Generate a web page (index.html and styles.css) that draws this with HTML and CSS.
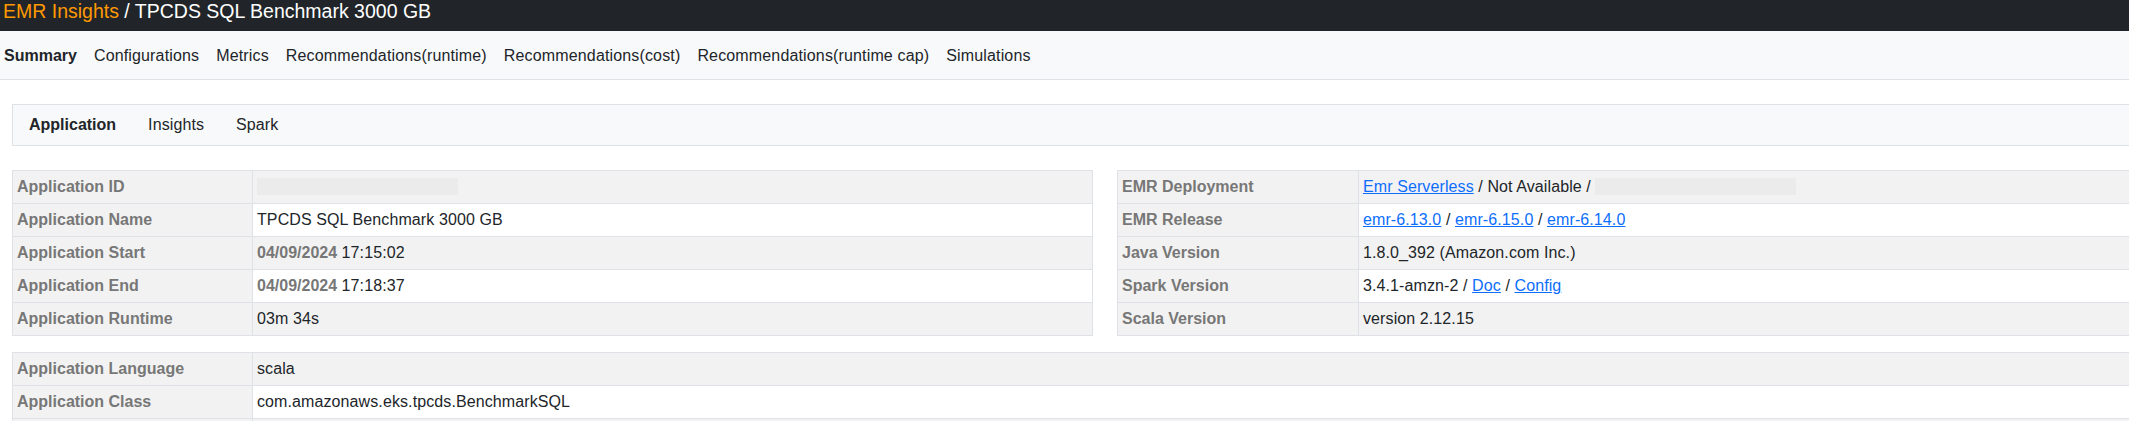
FILE: index.html
```html
<!DOCTYPE html>
<html lang="en">
<head>
<meta charset="utf-8">
<title>EMR Insights</title>
<link rel="stylesheet" href="styles.css">
</head>
<body>
<header class="topbar">
  <span class="brand">EMR Insights</span> / TPCDS SQL Benchmark 3000 GB
</header>
<nav class="mainnav">
  <a class="navlink active">Summary</a>
  <a class="navlink">Configurations</a>
  <a class="navlink">Metrics</a>
  <a class="navlink">Recommendations(runtime)</a>
  <a class="navlink">Recommendations(cost)</a>
  <a class="navlink">Recommendations(runtime cap)</a>
  <a class="navlink">Simulations</a>
</nav>
<main class="page">
  <div class="content">
    <div class="tabs">
      <a class="tab active">Application</a>
      <a class="tab">Insights</a>
      <a class="tab">Spark</a>
    </div>

    <div class="grid2">
      <table class="kv">
        <colgroup><col class="c-label-l"><col></colgroup>
        <tbody>
          <tr><th>Application ID</th><td><span class="redact"></span></td></tr>
          <tr><th>Application Name</th><td>TPCDS SQL Benchmark 3000 GB</td></tr>
          <tr><th>Application Start</th><td><b class="date">04/09/2024</b> 17:15:02</td></tr>
          <tr><th>Application End</th><td><b class="date">04/09/2024</b> 17:18:37</td></tr>
          <tr><th>Application Runtime</th><td>03m 34s</td></tr>
        </tbody>
      </table>
      <table class="kv">
        <colgroup><col class="c-label-r"><col></colgroup>
        <tbody>
          <tr><th>EMR Deployment</th><td><a class="lnk">Emr Serverless</a> / Not Available / <span class="redact"></span></td></tr>
          <tr><th>EMR Release</th><td><a class="lnk">emr-6.13.0</a> / <a class="lnk">emr-6.15.0</a> / <a class="lnk">emr-6.14.0</a></td></tr>
          <tr><th>Java Version</th><td>1.8.0_392 (Amazon.com Inc.)</td></tr>
          <tr><th>Spark Version</th><td>3.4.1-amzn-2 / <a class="lnk">Doc</a> / <a class="lnk">Config</a></td></tr>
          <tr><th>Scala Version</th><td>version 2.12.15</td></tr>
        </tbody>
      </table>
    </div>

    <table class="kv">
      <colgroup><col class="c-label-l"><col></colgroup>
      <tbody>
        <tr><th>Application Language</th><td>scala</td></tr>
        <tr><th>Application Class</th><td>com.amazonaws.eks.tpcds.BenchmarkSQL</td></tr>
        <tr class="empty-row"><th></th><td></td></tr>
      </tbody>
    </table>
  </div>
</main>
</body>
</html>
```

FILE: styles.css
```css
* { box-sizing: border-box; }

html, body {
  margin: 0;
  padding: 0;
}

body {
  font-family: "Liberation Sans", Arial, sans-serif;
  font-size: 16px;
  line-height: 24px;
  color: #212529;
  background: #ffffff;
  overflow: hidden;
}

a { text-decoration: none; color: inherit; }

.topbar {
  height: 31px;
  background: #212529;
  color: #ffffff;
  font-size: 19.5px;
  line-height: 23px;
  padding: 0 0 0 3px;
  white-space: nowrap;
}

.brand { color: #ff9900; }

.mainnav {
  display: flex;
  gap: 17px;
  height: 49px;
  padding: 13px 0 0 4px;
  background: #f8f9fa;
  border-bottom: 1px solid #dee2e6;
  white-space: nowrap;
}

.navlink {
  color: #212529;
  letter-spacing: 0.15px;
}
.navlink.active { font-weight: bold; letter-spacing: 0; }

.page {
  padding: 0 12px;
}

.content {
  width: 2186px;
}

.tabs {
  display: flex;
  margin-top: 24px;
  background: #f8f9fa;
  border: 1px solid #dee2e6;
}

.tab {
  padding: 8px 16px;
  color: #212529;
  letter-spacing: 0.1px;
}
.tab.active { font-weight: bold; letter-spacing: 0; }

.grid2 {
  display: grid;
  grid-template-columns: 1fr 1fr;
  gap: 24px;
  margin-top: 24px;
  margin-bottom: 16px;
}

.kv {
  width: 100%;
  border-collapse: collapse;
  table-layout: fixed;
}

.c-label-l { width: 240px; }
.c-label-r { width: 241px; }

.kv th,
.kv td {
  border: 1px solid #dee2e6;
  padding: 4px 4px;
  text-align: left;
  vertical-align: top;
  white-space: nowrap;
  overflow: hidden;
}

.kv td { letter-spacing: 0.1px; }

.kv th {
  font-weight: bold;
  color: #777777;
  background: #f2f2f2;
}

.kv tbody tr:nth-child(odd) td {
  background: #f2f2f2;
}

.kv .empty-row th,
.kv .empty-row td {
  height: 33px;
}

.date {
  color: #777777;
  font-weight: bold;
  letter-spacing: 0;
}

.lnk {
  color: #0d6efd;
  text-decoration: underline;
}

.redact {
  display: inline-block;
  width: 201px;
  height: 17px;
  background: #ebebeb;
  vertical-align: -3px;
}
```
